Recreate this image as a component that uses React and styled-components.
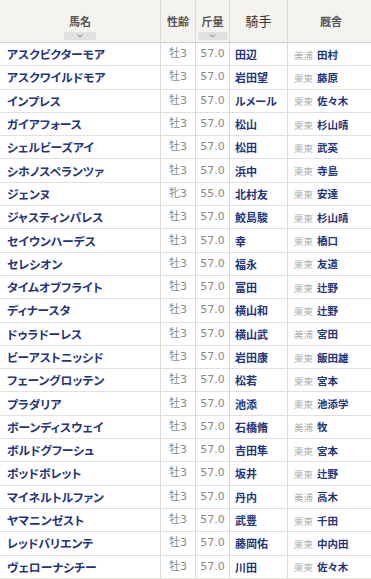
import React from 'react'
import styled, { createGlobalStyle } from 'styled-components'

const GlobalStyle = createGlobalStyle`
  body {
    margin: 0;
    background: #fff;
    font-family: "Noto Sans CJK JP", "Noto Sans", sans-serif;
  }
`

const horses = [
  ['アスクビクターモア', '牡3', '57.0', '田辺', '美浦', '田村'],
  ['アスクワイルドモア', '牡3', '57.0', '岩田望', '栗東', '藤原'],
  ['インプレス', '牡3', '57.0', 'ルメール', '栗東', '佐々木'],
  ['ガイアフォース', '牡3', '57.0', '松山', '栗東', '杉山晴'],
  ['シェルビーズアイ', '牡3', '57.0', '松田', '栗東', '武英'],
  ['シホノスペランツァ', '牡3', '57.0', '浜中', '栗東', '寺島'],
  ['ジェンヌ', '牝3', '55.0', '北村友', '栗東', '安達'],
  ['ジャスティンパレス', '牡3', '57.0', '鮫島駿', '栗東', '杉山晴'],
  ['セイウンハーデス', '牡3', '57.0', '幸', '栗東', '橋口'],
  ['セレシオン', '牡3', '57.0', '福永', '栗東', '友道'],
  ['タイムオブフライト', '牡3', '57.0', '富田', '栗東', '辻野'],
  ['ディナースタ', '牡3', '57.0', '横山和', '栗東', '辻野'],
  ['ドゥラドーレス', '牡3', '57.0', '横山武', '美浦', '宮田'],
  ['ビーアストニッシド', '牡3', '57.0', '岩田康', '栗東', '飯田雄'],
  ['フェーングロッテン', '牡3', '57.0', '松若', '栗東', '宮本'],
  ['プラダリア', '牡3', '57.0', '池添', '栗東', '池添学'],
  ['ボーンディスウェイ', '牡3', '57.0', '石橋脩', '美浦', '牧'],
  ['ボルドグフーシュ', '牡3', '57.0', '吉田隼', '栗東', '宮本'],
  ['ポッドボレット', '牡3', '57.0', '坂井', '栗東', '辻野'],
  ['マイネルトルファン', '牡3', '57.0', '丹内', '美浦', '高木'],
  ['ヤマニンゼスト', '牡3', '57.0', '武豊', '栗東', '千田'],
  ['レッドバリエンテ', '牡3', '57.0', '藤岡佑', '栗東', '中内田'],
  ['ヴェローナシチー', '牡3', '57.0', '川田', '栗東', '佐々木'],
]

const Table = styled.table`
  width: 371px;
  border-collapse: collapse;
  table-layout: fixed;
`

const Th = styled.th`
  width: ${p => p.w}px;
  height: 42px;
  padding: 0;
  background: #f5f3ef;
  border-right: 1px solid #dcd9d2;
  border-bottom: 1px solid #d4d1ca;
  color: ${p => (p.big ? '#333' : '#555')};
  font-size: ${p => (p.big ? '13px' : '11px')};
  font-weight: ${p => (p.big ? 'normal' : 'bold')};
  text-align: center;
  vertical-align: middle;
  position: relative;
`

const Label = styled.div`
  line-height: 14px;
`

const SortButton = styled.div`
  position: absolute;
  left: 50%;
  bottom: 2px;
  transform: translateX(-50%);
  width: ${p => p.w}px;
  height: 8px;
  background: #e0e0e0;
  display: flex;
  align-items: center;
  justify-content: center;
`

const Tr = styled.tr`
  height: 23.3px;
`

const Td = styled.td`
  padding: 0 0 0 ${p => p.pl || 0}px;
  border-right: 1px solid #dedbd5;
  border-bottom: 1px solid #e2e0dc;
  text-align: ${p => p.align || 'left'};
  font-size: ${p => p.size || 12}px;
  font-weight: ${p => (p.bold ? 'bold' : 'normal')};
  color: ${p => p.color || '#999'};
  white-space: nowrap;
  overflow: hidden;
  line-height: 16px;
  font-feature-settings: "palt";
  font-family: ${p => (p.num ? '"DejaVu Sans", "Noto Sans CJK JP", sans-serif' : 'inherit')};
`

const Region = styled.span`
  color: #b0b0b0;
  font-weight: normal;
  font-size: 9.5px;
  margin-right: 4px;
`

const Trainer = styled.span`
  color: #22347c;
  font-weight: bold;
  font-size: 10.5px;
`

const Chevron = () => (
  <svg width="6" height="4" viewBox="0 0 6 4">
    <path d="M0.5 0.5 L3 3 L5.5 0.5" fill="none" stroke="#777" strokeWidth="1" />
  </svg>
)

export default function App() {
  return (
    <>
      <GlobalStyle />
      <Table>
        <thead>
          <tr>
            <Th w={160}>
              <Label>馬名</Label>
              <SortButton w={32}><Chevron /></SortButton>
            </Th>
            <Th w={34}><Label>性齢</Label></Th>
            <Th w={33}>
              <Label>斤量</Label>
              <SortButton w={29}><Chevron /></SortButton>
            </Th>
            <Th w={57} big><Label>騎手</Label></Th>
            <Th w={86}><Label>厩舎</Label></Th>
            <Th w={1} />
          </tr>
        </thead>
        <tbody>
          {horses.map(h => (
            <Tr key={h[0]}>
              <Td pl={7} size={11.8} bold color="#22347c">{h[0]}</Td>
              <Td align="center" size={11} num color="#888">{h[1]}</Td>
              <Td align="center" size={11} num color="#888">{h[2]}</Td>
              <Td pl={5} size={11} bold color="#22347c">{h[3]}</Td>
              <Td pl={6}>
                <Region>{h[4]}</Region>
                <Trainer>{h[5]}</Trainer>
              </Td>
              <Td />
            </Tr>
          ))}
        </tbody>
      </Table>
    </>
  )
}
